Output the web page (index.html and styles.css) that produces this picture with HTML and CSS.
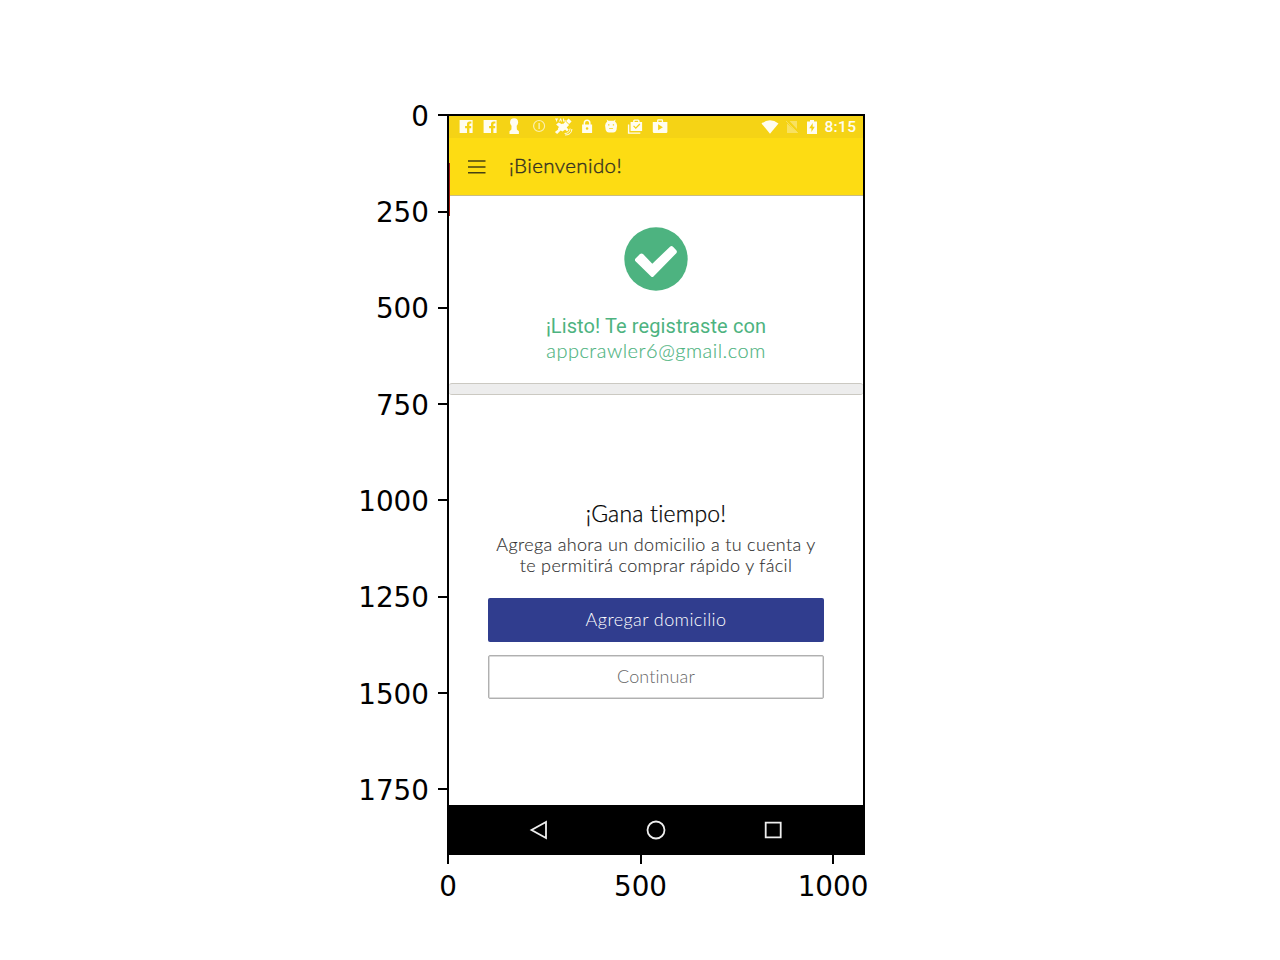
FILE: index.html
```html
<!DOCTYPE html>
<html lang="es">
<head>
<meta charset="utf-8">
<title>¡Bienvenido!</title>
<link rel="stylesheet" href="styles.css">
</head>
<body>
<main class="figure">
  <div class="y-axis">
    <div class="y-tick"><span>0</span></div>
    <div class="y-tick"><span>250</span></div>
    <div class="y-tick"><span>500</span></div>
    <div class="y-tick"><span>750</span></div>
    <div class="y-tick"><span>1000</span></div>
    <div class="y-tick"><span>1250</span></div>
    <div class="y-tick"><span>1500</span></div>
    <div class="y-tick"><span>1750</span></div>
  </div>
  <section class="screen">
    <div class="edge-mark"></div>
    <div class="status-bar">
      <div class="notifications">
        <svg viewBox="0 0 24 22"><path fill-rule="evenodd" d="M5.500 4h13v13h-3.200v-4.800h1.800V10h-1.800V8.600q0-1 1-1h1V5.500h-1.800q-2.600 0-2.600 2.600V10H11v2.200h1.900V17H5.500z"/></svg>
        <svg viewBox="0 0 24 22"><path fill-rule="evenodd" d="M5.500 4h13v13h-3.200v-4.800h1.800V10h-1.800V8.600q0-1 1-1h1V5.500h-1.800q-2.600 0-2.600 2.600V10H11v2.200h1.900V17H5.500z"/></svg>
        <svg viewBox="0 0 24 22"><circle cx="12" cy="6.200" r="4"/><path d="M9.500 8.500h5l.3 5 2 1.700V18H7.400v-2.800l1.900-1.700z"/></svg>
        <svg viewBox="0 0 24 22" class="dim"><circle cx="12" cy="10" r="5.500" fill="none" stroke="#fff" stroke-width="1.200"/><path d="M11.300 7h1.500v6h-1.500z"/></svg>
        <svg viewBox="0 0 24 22"><path d="M4 2.500h3v1H6v2H5v-2H4zM8 5.500l1-3h1l1 3h-1v-1H9v1zM12 2.500h1v2h2v1h-3z"/><path d="M15 5l2.500-2.500 3 3L18 8zM12 8l2.500-2.500 3.500 3.500-2.500 2.500zM7 12l4.500-4.500 4.500 4.500-4.500 3.500-2-1L6 18l-2.200-2L7 13.500zM5 8.500L7.500 6.500l4 2-3 3zM13.500 13l2-1.500 2 2-1.500 2z"/><path d="M13.500 17.500q5 0 5.500-5M14 19q6.500 0 6.800-6" fill="none" stroke="#fff" stroke-width=".9"/></svg>
        <svg viewBox="0 0 24 22"><path fill-rule="evenodd" d="M7 8.500h1.500V7a3.500 3.500 0 0 1 7 0v1.500H17V17H7zM10 8.500h4V7a2 2 0 0 0-4 0zM12 11.200a1.300 1.300 0 1 0 0 2.600 1.300 1.300 0 0 0 0-2.600z"/></svg>
        <svg viewBox="0 0 24 22"><path fill-rule="evenodd" d="M7.500 3.500l1.800 1.200h5.400l1.800-1.200-.6 2Q17.800 7 18 9.500l-.6 4.500q-1 2.500-3.200 2.500H9.800Q7.600 16.500 6.600 14L6 9.500q.2-2.500 2.100-4zM9 8.200v1.300h1.300V8.200zm4.700 0v1.300H15V8.200zM10 12.200v.7h4v-.7z"/></svg>
        <svg viewBox="0 0 24 22"><path fill-rule="evenodd" d="M7.500 6H10V5q0-1.500 1.500-1.500h3.500q1.500 0 1.500 1.500v1h2.500v9H7.500zM11.500 6h3.500V4.800h-3.500zM10 10.300l2.700 2.700 4.500-4.500-.9-.9-3.600 3.600-1.800-1.800z"/><path d="M4.800 8.500h1.400v8h11v1.300H4.800z"/></svg>
        <svg viewBox="0 0 24 22"><path fill-rule="evenodd" d="M4.700 6H9V4.500Q9 3.200 10.300 3.200h3.400Q15 3.200 15 4.500V6h4.300v9.700Q19.300 17 18 17H6Q4.700 17 4.700 15.700zM10.300 6h3.400V4.500h-3.400zM10 8.300v6l4.800-3z"/></svg>
      </div>
      <div class="system">
        <svg class="wifi" viewBox="0 0 18 14"><path d="M.5 3.500Q9-3 17.500 3.500L9 13.800z"/></svg>
        <svg class="sim" viewBox="0 0 14 14"><path d="M4.500 1H12v8zM2 3.500L12 12v1H2z"/><path d="M1 1l12 12" stroke="#fff" stroke-width=".8"/></svg>
        <svg class="battery" viewBox="0 0 10 14"><path fill-rule="evenodd" d="M3 0h4v1.500h3V14H0V1.500h3zM5.700 3L2.200 8.200h2.200v3.800L7.800 6.700H5.700z"/></svg>
        <span class="clock">8:15</span>
      </div>
    </div>
    <header class="app-bar">
      <svg class="menu" viewBox="0 0 18 14"><path d="M0 1h17.500M0 7h17.500M0 12.700h17.500"/></svg>
      <h1 class="title">¡Bienvenido!</h1>
    </header>
    <div class="card confirmation">
      <svg class="check" viewBox="0 0 64 64"><circle cx="32" cy="32" r="31.700" fill="#4db380"/><path d="M11.500 31.500l4.500-4.500q1.500-1.200 3 0l9.300 9.700L46 19.700q1.500-1.200 3 0l3.300 3.500q1.200 1.500 0 3L29.500 49.500q-1.200 1-2.400 0L11.500 34.300q-1.200-1.400 0-2.800z" fill="#fff"/></svg>
      <p class="registered">¡Listo! Te registraste con</p>
      <p class="email">appcrawler6@gmail.com</p>
    </div>
    <div class="divider"></div>
    <div class="card address">
      <h2 class="heading">¡Gana tiempo!</h2>
      <p class="copy"><span class="line">Agrega ahora un domicilio a tu cuenta y</span><span class="line">te permitirá comprar rápido y fácil</span></p>
      <button class="button primary">Agregar domicilio</button>
      <button class="button secondary">Continuar</button>
    </div>
    <nav class="nav-bar">
      <svg viewBox="0 0 20 20"><path d="M17 2v16L2.500 10z"/></svg>
      <svg viewBox="0 0 20 20"><circle cx="10" cy="10" r="8.500"/></svg>
      <svg viewBox="0 0 20 20"><path d="M2.700 2.700h15v14.600h-15z"/></svg>
    </nav>
  </section>
  <div class="x-axis">
    <div class="x-tick">0</div>
    <div class="x-tick">500</div>
    <div class="x-tick">1000</div>
  </div>
</main>
</body>
</html>
```

FILE: styles.css
```css
* { box-sizing: border-box; }
body { margin: 0; background: #fff; color: #000; }
h1, h2, p { margin: 0; font-weight: 400; white-space: nowrap; }
svg { display: block; flex: none; }

.figure {
  display: grid;
  grid-template-columns: 447px 418px;
  grid-template-rows: 741px 60px;
  width: 1280px;
  height: 960px;
  padding-top: 114px;
  align-content: start;
  font-family: "DejaVu Sans", sans-serif;
  font-size: 27.8px;
}

.y-axis { margin-top: -46.850px; }
.y-tick {
  display: flex;
  align-items: center;
  justify-content: flex-end;
  gap: 9px;
  height: 96.300px;
  line-height: 32px;
}
.y-tick span { padding-top: 3px; }
.y-tick::after { content: ""; width: 9px; height: 2px; background: #000; }

.x-axis {
  grid-column: 2;
  display: grid;
  grid-template-columns: repeat(3, 192.500px);
  margin-left: -95.250px;
}
.x-tick {
  display: flex;
  flex-direction: column;
  align-items: center;
  line-height: 32px;
  gap: 7px;
}
.x-tick::before { content: ""; width: 2px; height: 9px; background: #000; }

.screen {
  position: relative;
  display: flex;
  flex-direction: column;
  border: 2px solid #000;
  background: #fff;
  font-family: Lato, "Open Sans", sans-serif;
  font-variant-ligatures: none;
}
.edge-mark {
  position: absolute;
  left: 0;
  top: 47px;
  width: 1px;
  height: 53px;
  background: #a51c12;
}

.status-bar {
  display: flex;
  justify-content: space-between;
  height: 22px;
  padding: 0 6.500px 0 5px;
  background: #f5d315;
}
.status-bar svg { fill: #fffdf0; }
.notifications { display: flex; }
.notifications svg { width: 24.200px; height: 22px; }
.notifications .dim { opacity: .65; }
.system { display: flex; align-items: center; }
.wifi { width: 18px; height: 14px; }
.sim { width: 14px; height: 14px; margin-left: 6px; opacity: .35; }
.battery { width: 10px; height: 14px; margin-left: 8px; }
.clock {
  margin-left: 7px;
  color: #fffdf0;
  font: 500 15.500px/22px Roboto, sans-serif;
  letter-spacing: .4px;
}

.app-bar {
  display: flex;
  align-items: center;
  height: 58px;
  padding-left: 19px;
  background: #fddc13;
  border-bottom: 1px solid #c9bd83;
}
.menu { width: 18px; height: 14px; fill: none; stroke: #454013; stroke-width: 1.600; }
.title {
  margin-left: 23px;
  padding-bottom: 4px;
  color: #353222;
  font-size: 20.500px;
  font-weight: 300;
  line-height: 28px;
  letter-spacing: .4px;
  -webkit-text-stroke: .4px #353222;
}

.card { display: flex; flex-direction: column; align-items: center; }
.confirmation { height: 187px; padding-top: 31px; color: #4db380; }
.check { width: 64px; height: 64px; }
.registered { margin-top: 23px; font: 400 20px/25px Roboto, sans-serif; letter-spacing: .1px; }
.email { margin-top: -1px; font-size: 20px; font-weight: 300; line-height: 25px; letter-spacing: .5px; -webkit-text-stroke: .15px #4db380; }
.divider {
  height: 12px;
  background: #ededed;
  border: 1px solid #cbc9c2;
  border-width: 1px 0;
  border-radius: 3px;
}
.address { height: 410px; padding-top: 103px; }
.heading { font-size: 23px; font-weight: 300; line-height: 30px; letter-spacing: .2px; -webkit-text-stroke: .25px #000; }
.copy {
  margin-top: 6px;
  color: #333;
  font-size: 18px;
  font-weight: 300;
  line-height: 21px;
  text-align: center;
  letter-spacing: .33px;
  -webkit-text-stroke: .15px #333;
}
.line { display: block; }
.button {
  width: 336px;
  height: 44px;
  padding: 0 0 2px;
  border: 0;
  border-radius: 2px;
  font: 300 18px/40px Lato, "Open Sans", sans-serif;
  font-variant-ligatures: none;
  letter-spacing: .4px;
}
.primary { margin-top: 22px; background: #303d8e; color: #fff; }
.secondary { margin-top: 13px; background: #fff; border: 1px solid #b0b0b0; box-shadow: inset 0 0 0 .5px #b8b8b8; color: #666; letter-spacing: .1px; }

.nav-bar {
  display: flex;
  align-items: center;
  justify-content: center;
  gap: 97px;
  height: 48px;
  padding-top: 2px;
  background: #000;
}
.nav-bar svg { width: 20px; height: 20px; fill: none; stroke: #eee; stroke-width: 1.800; }
```
